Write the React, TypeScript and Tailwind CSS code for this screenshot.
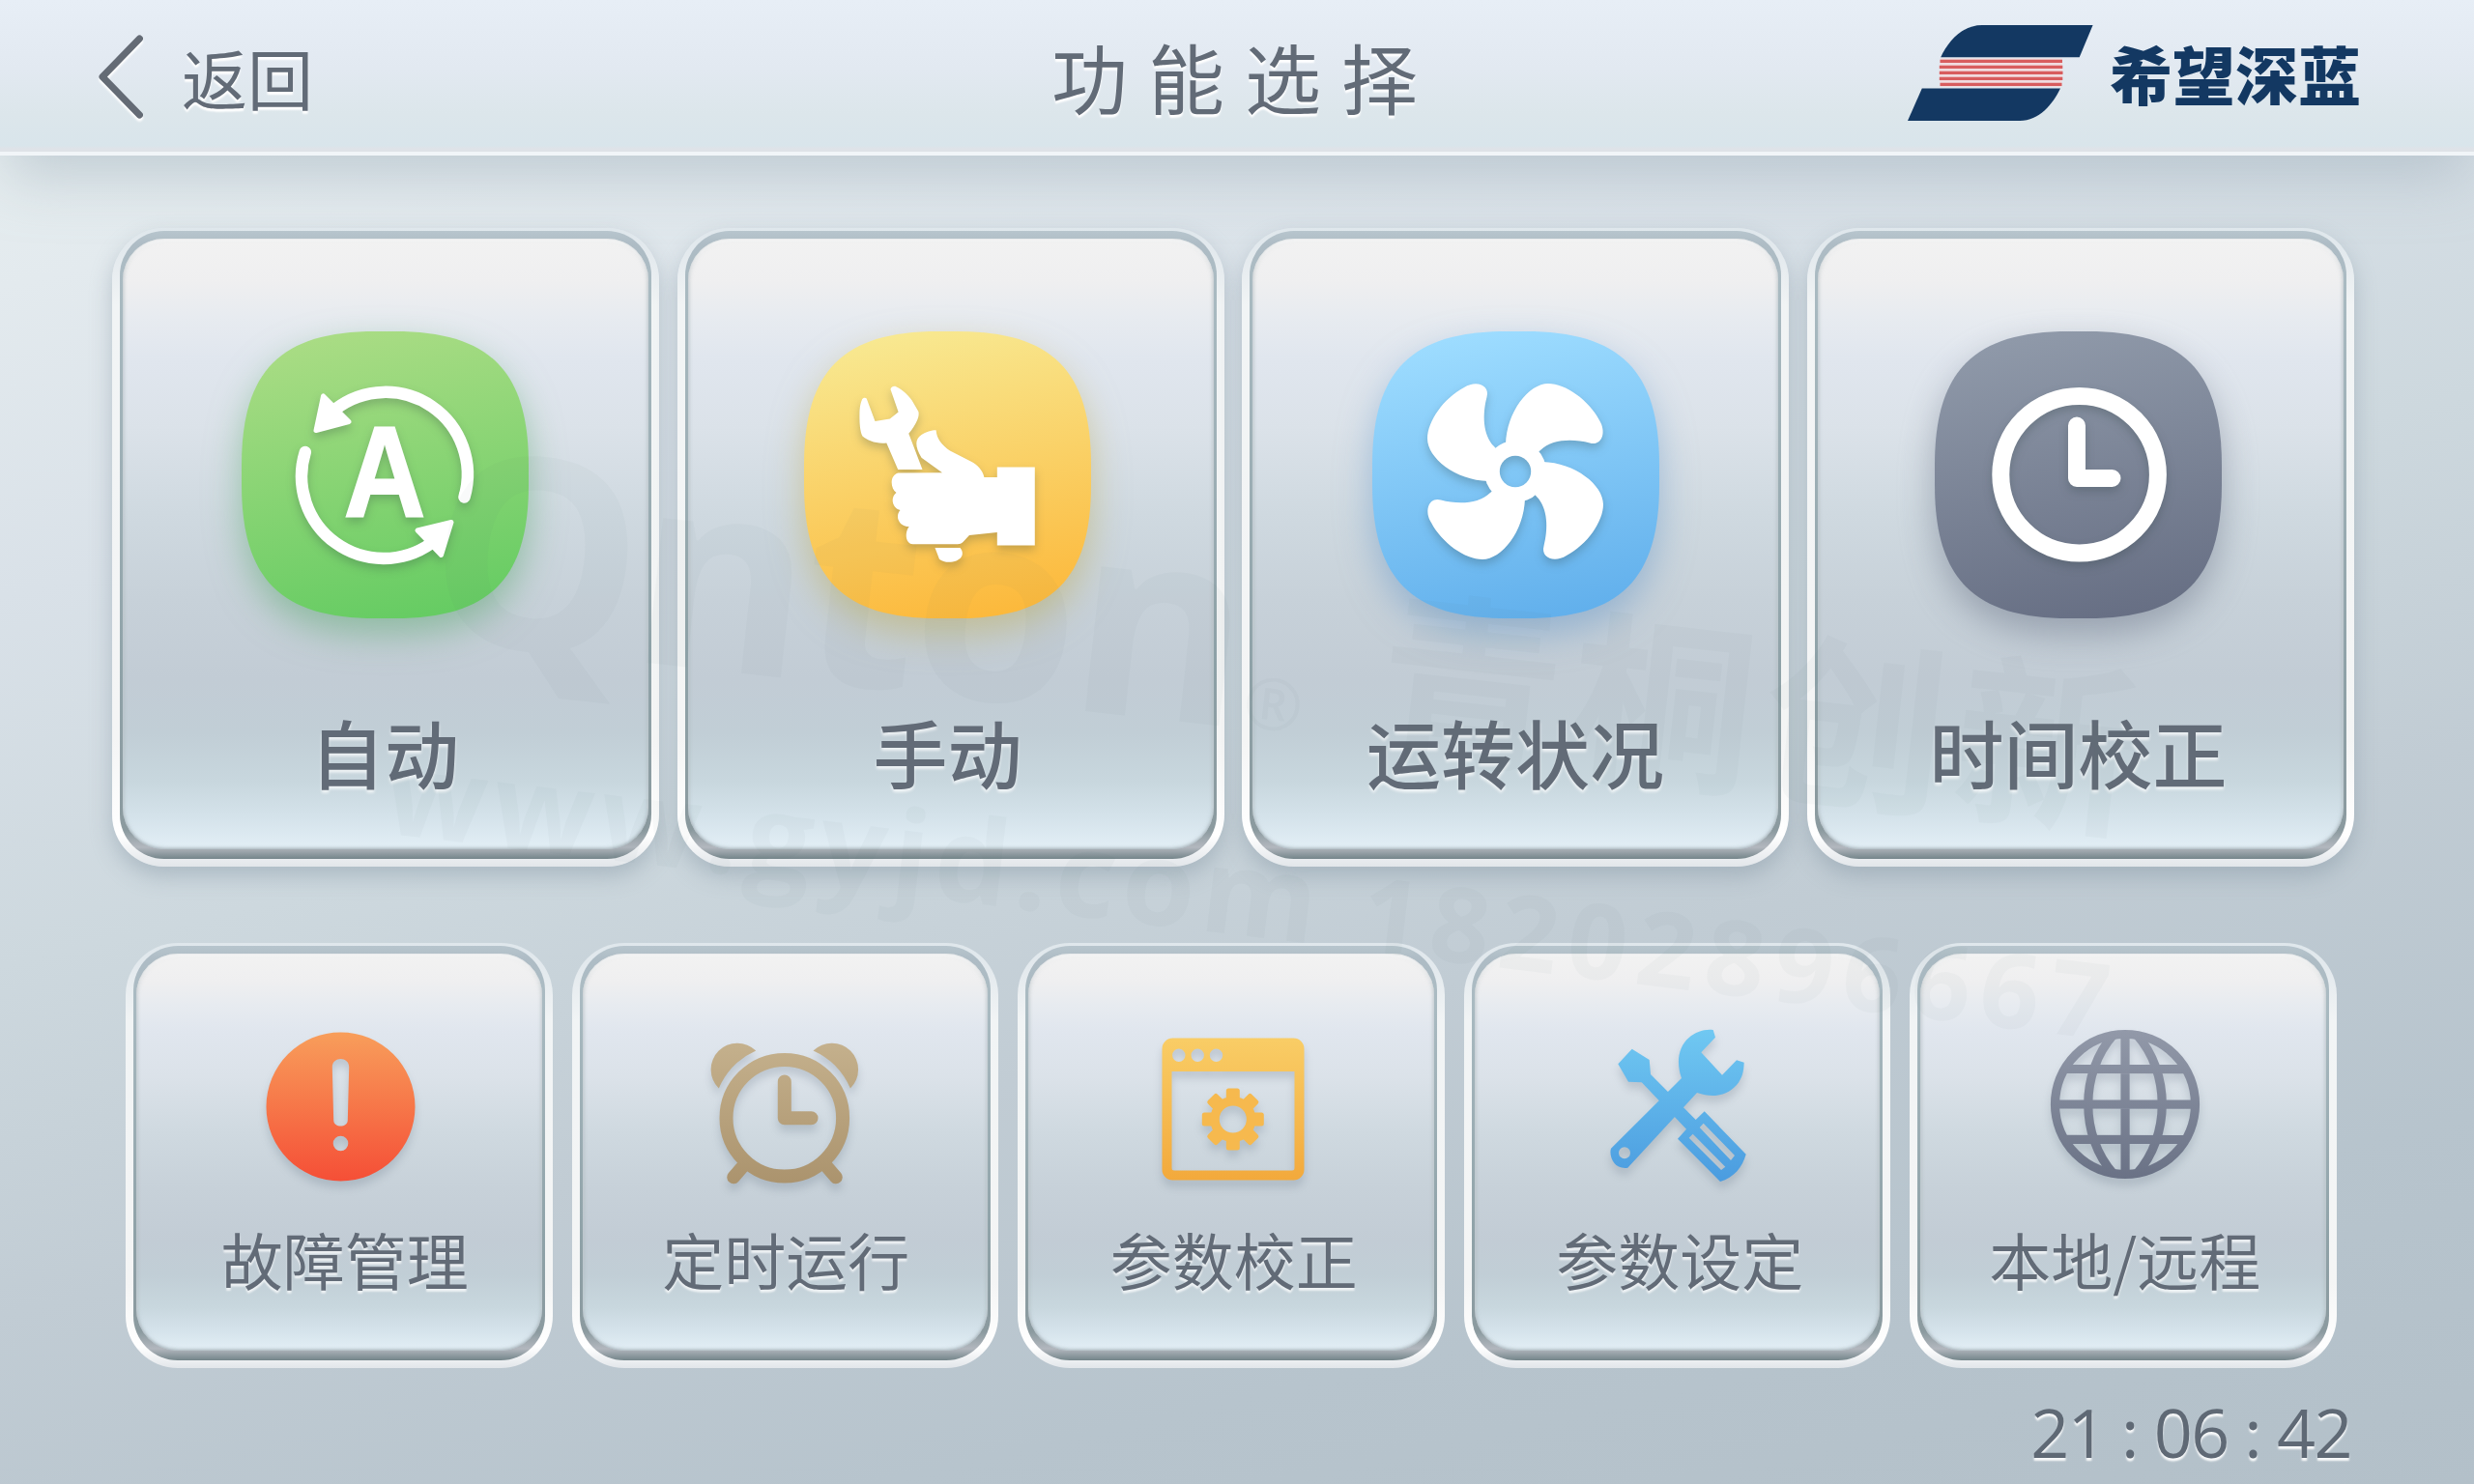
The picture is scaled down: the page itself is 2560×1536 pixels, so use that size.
import React from 'react';
import clsx from 'clsx';

const TILE_PATH =
  'M138.500 0H158.500C256.500 0 297 40.500 297 138.500V158.500C297 256.500 256.500 297 158.500 297H138.500C40.500 297 0 256.500 0 158.500V138.500C0 40.500 40.500 0 138.500 0Z';

type TileProps = {
  id: string;
  from: string;
  to: string;
  className: string;
  children: React.ReactNode;
};

// Rounded gradient tile with a white pictogram on it
function Tile({ id, from, to, className, children }: TileProps) {
  return (
    <svg viewBox="0 0 297 297" className={clsx('w-[297px] h-[297px] overflow-visible', className)}>
      <defs>
        <linearGradient id={id} x1="0.4" y1="0" x2="0.6" y2="1">
          <stop offset="0" stopColor={from} />
          <stop offset="1" stopColor={to} />
        </linearGradient>
      </defs>
      <path d={TILE_PATH} fill={`url(#${id})`} />
      <g className="drop-shadow-[0_5px_5px_rgba(40,60,60,0.25)]">{children}</g>
    </svg>
  );
}

function AutoIcon() {
  return (
    <Tile
      id="tile-auto"
      from="#a9dc84"
      to="#66cc63"
      className="drop-shadow-[0_16px_18px_rgba(85,165,105,0.5)]"
    >
      <g fill="none" stroke="#fff" strokeWidth="12.5" strokeLinecap="round">
        <path d="M97 80.5A85 85 0 0 1 230.5 171.5" />
        <path d="M65.8 125A85 85 0 0 0 196 219.5" />
      </g>
      <g fill="#fff" stroke="#fff" strokeWidth="5" strokeLinejoin="round">
        <path d="M84.5 67L77 102.5L111 93.5Z" />
        <path d="M182 206L217 197.5L206.5 231.5Z" />
      </g>
      <text
        transform="translate(148 192.4) scale(0.88 1)"
        textAnchor="middle"
        fill="#fff"
        stroke="#fff"
        strokeWidth="2"
        className="text-[133px] font-bold font-['Liberation_Sans',sans-serif]"
      >
        A
      </text>
    </Tile>
  );
}

function ManualIcon() {
  return (
    <Tile
      id="tile-manual"
      from="#f8e890"
      to="#fcb93c"
      className="drop-shadow-[0_16px_18px_rgba(190,172,85,0.5)]"
    >
      <g fill="#fff">
        <path d="M57.4 87C57.4 80 58 75 60 70.5C61 68.5 63.5 68 64.7 69.5L73.5 92.9L88.8 90.6L97.6 83.5L89.5 60C89.5 57.5 93 56 95.3 57.2C102 60.5 108 66 111.7 71.4L118.4 83C119 86 118.5 88 117.5 91C115 97 112 101.5 108.3 105.8L122.5 142.9H97.2L85.3 115.5C74 116.5 66 113 60.5 108.5C58 104 57.4 96 57.4 87Z" />
        <path d="M121.5 130.8C118 125 116.3 120 116.3 116C116.3 112 118.5 109 121.5 107C126 104 133 102 136.6 102.2C137 106 138 110 140.5 113.5C143.5 117.5 147 121 151 123.5L173 134.8C179 138 185 143.5 186.4 151H199.8V140.6H238.8V221.4H199.8V208L171 211L164.5 218C163 219.5 161 220.2 159 220.2H112.5C105.5 220 103.5 209 108.7 202C99 202.5 93.5 192 99.5 185C92 183.5 88.5 172.5 95.5 167C89 162 88.5 149 97.5 146.6L143 146.2Z" />
        <path d="M135.5 224H161.5C164 227 164.5 230 163 233C159 240 145 240.5 140 235.7Z" />
      </g>
    </Tile>
  );
}

const BLADE =
  'M-10 -28C-9 -62 14 -91 34 -91C52 -91 76 -74 87 -53C95 -40 89 -26 77 -29.5C60 -34 38 -34 26 -22L0 0Z';

function FanIcon() {
  return (
    <Tile
      id="tile-fan"
      from="#9ddcff"
      to="#62b0ec"
      className="drop-shadow-[0_16px_18px_rgba(100,150,200,0.5)]"
    >
      <mask id="fan-hub" maskUnits="userSpaceOnUse" x="-110" y="-110" width="220" height="220">
        <rect x="-110" y="-110" width="220" height="220" fill="#fff" />
        <circle r="16.2" fill="#000" />
      </mask>
      <g transform="translate(148 145)">
        <g fill="#fff" mask="url(#fan-hub)">
          {[0, 90, 180, 270].map((deg) => (
            <path key={deg} d={BLADE} transform={`rotate(${deg})`} />
          ))}
          <circle r="32" />
        </g>
      </g>
    </Tile>
  );
}

function ClockIcon() {
  return (
    <Tile
      id="tile-clock"
      from="#8f99a9"
      to="#676f84"
      className="drop-shadow-[0_16px_18px_rgba(95,105,125,0.45)]"
    >
      <g fill="none" stroke="#fff" strokeWidth="18" strokeLinecap="round" strokeLinejoin="round">
        <circle cx="149.6" cy="148.2" r="81.3" />
        <path d="M147 97.5V152H183.5" />
      </g>
    </Tile>
  );
}

type GlyphProps = {
  id: string;
  from: string;
  to: string;
  children: React.ReactNode;
};

// Flat icon canvas used by the small cards; children refer to the gradient by id
function Glyph({ id, from, to, children }: GlyphProps) {
  return (
    <svg
      viewBox="0 0 160 160"
      className="w-[160px] h-[160px] overflow-visible drop-shadow-[0_7px_4px_rgba(90,110,125,0.24)]"
    >
      <defs>
        <linearGradient id={id} gradientUnits="userSpaceOnUse" x1="80" y1="0" x2="80" y2="160">
          <stop offset="0" stopColor={from} />
          <stop offset="1" stopColor={to} />
        </linearGradient>
      </defs>
      {children}
    </svg>
  );
}

function FaultIcon() {
  return (
    <Glyph id="g-fault" from="#f8a05c" to="#f54e36">
      <path
        fill="url(#g-fault)"
        fillRule="evenodd"
        d="M81.5 4.5A77 77 0 1 1 81.5 158.5A77 77 0 1 1 81.5 4.5ZM72.8 40.5L74.2 95.5C74.4 103.5 88.6 103.5 88.8 95.5L90.2 40.5C90.2 29 72.8 29 72.8 40.5ZM81.5 111.7A7.8 7.8 0 1 0 81.5 127.3A7.8 7.8 0 1 0 81.5 111.7Z"
      />
    </Glyph>
  );
}

function AlarmIcon() {
  return (
    <Glyph id="g-alarm" from="#c4b08c" to="#a8906a">
      <g transform="translate(6.5 17.5)">
        <g fill="url(#g-alarm)">
          <path d="M43.7 6A26.7 26.7 0 0 0 5.3 45A76 76 0 0 1 43.7 6Z" />
          <path d="M103 6A26.7 26.7 0 0 1 141.4 45A76 76 0 0 0 103 6Z" />
        </g>
        <g fill="none" stroke="url(#g-alarm)" strokeLinecap="round" strokeLinejoin="round">
          <circle cx="73.3" cy="75.7" r="60.3" strokeWidth="14" />
          <path d="M73.3 38V75.7H101" strokeWidth="14" />
          <path d="M30 126L20.5 137M117 126L126.5 137" strokeWidth="13.5" />
        </g>
      </g>
    </Glyph>
  );
}

function WindowIcon() {
  return (
    <Glyph id="g-window" from="#f9cd66" to="#f2a638">
      <g transform="translate(8.5 10.5)" fill="url(#g-window)">
        <path
          fillRule="evenodd"
          d="M11 0H136A11 11 0 0 1 147 11V136A11 11 0 0 1 136 147H11A11 11 0 0 1 0 136V11A11 11 0 0 1 11 0ZM10 34.5V134.5Q10 137 12.5 137H134.5Q137 137 137 134.5V34.5ZM17.3 11A6.7 6.7 0 1 0 17.3 24.4A6.7 6.7 0 1 0 17.3 11ZM36.7 11A6.7 6.7 0 1 0 36.7 24.4A6.7 6.7 0 1 0 36.7 11ZM56 11A6.7 6.7 0 1 0 56 24.4A6.7 6.7 0 1 0 56 11Z"
        />
        {/* Gear */}
        <g transform="translate(73.3 84)" fill="#f6b94e">
          {[0, 45, 90, 135, 180, 225, 270, 315].map((deg) => (
            <rect
              key={deg}
              x="-7"
              y="-32"
              width="14"
              height="14"
              rx="2.5"
              transform={`rotate(${deg})`}
            />
          ))}
          <circle r="18.8" fill="none" stroke="#f6b94e" strokeWidth="9.5" />
        </g>
      </g>
    </Glyph>
  );
}

function ToolsIcon() {
  return (
    <Glyph id="g-tools" from="#70c8f2" to="#4a9bdf">
      <g transform="translate(11 2)" fill="url(#g-tools)" fillRule="evenodd">
        <path d="M22.7 19.7L40.7 31L42 46L88.7 93L97.7 84.3L140.7 128.7C137 142 128 153 114 157L70 112.7L79 102.7L32.7 54.3L19 53.7L8.3 35.3ZM96.7 96.7L92.7 101L125 135L129 130ZM85.7 107.7L81.7 111.7L115 145L119.3 141.7Z" />
        <path d="M106.7 0L109 7.7L94.3 23.3L116 46.7L131 31.3L138.7 33.7C138.5 42 137 50 131 57C121 68.5 106 70.5 90 65L18.3 142.7C12 143.5 7 141.5 4.5 138C1 134 -0.5 127 1 122.7L74 50C68 33 71 17 81.7 8C89 2 97 -1 106.7 0ZM15 121.3A6 6 0 1 0 15 133.3A6 6 0 1 0 15 121.3Z" />
      </g>
    </Glyph>
  );
}

function GlobeIcon() {
  return (
    <Glyph id="g-globe" from="#9299a9" to="#687084">
      <g transform="translate(5 2)" fill="none" stroke="url(#g-globe)" strokeWidth="9.2">
        <circle cx="77" cy="77" r="72.5" />
        <path d="M77 4L77.1 150M5 77L149 77.1M16 40.5L138 40.6M16 113.4L138 113.5" />
        <path d="M65 5C30 44 30 110 65 149M89 5C124 44 124 110 89 149" />
      </g>
    </Glyph>
  );
}

function BrandMark() {
  return (
    <svg viewBox="1974 25 192 101" className="w-[192px] h-[101px]">
      <g fill="#133862">
        <path d="M2008.2 59.2C2016 43 2030 26 2051 26H2165.6L2151.7 59.2Z" />
        <path d="M1988.8 91.5H2132C2124 108 2110 125 2090 125H1974Z" />
      </g>
      <path d="M2008 60.5H2133.5Q2135 75 2133 90H2008Q2006 75 2008 60.5Z" fill="#f1dcdf" />
      <path
        d="M2007.5 63.3H2134M2006.8 69.3H2134.3M2006.8 75.3H2134.5M2006.8 81.3H2134.3M2007.5 87.3H2133.5"
        stroke="#d85d5e"
        strokeWidth="3.3"
      />
    </svg>
  );
}

type CardItem = {
  label: string;
  icon: () => React.JSX.Element;
  nudge?: string;
};

const mainCards: CardItem[] = [
  { label: '自动', icon: AutoIcon, nudge: 'pr-0.5' },
  { label: '手动', icon: ManualIcon, nudge: 'pr-1.5' },
  { label: '运转状况', icon: FanIcon },
  { label: '时间校正', icon: ClockIcon, nudge: 'pr-1' },
];

const subCards: CardItem[] = [
  { label: '故障管理', icon: FaultIcon, nudge: 'pl-3' },
  { label: '定时运行', icon: AlarmIcon, nudge: 'pl-0.5' },
  { label: '参数校正', icon: WindowIcon, nudge: 'pl-1.5' },
  { label: '参数设定', icon: ToolsIcon, nudge: 'pl-1.5' },
  { label: '本地/远程', icon: GlobeIcon, nudge: 'pl-1' },
];

type BevelProps = {
  className?: string;
  faceClassName?: string;
  children: React.ReactNode;
};

// White rim, dark groove, then the glossy face
function Bevel({ className, faceClassName, children }: BevelProps) {
  return (
    <button
      className={clsx(
        'block rounded-[54px] px-[8px] pt-[3px] pb-[8px]',
        'bg-[linear-gradient(180deg,#dfe7ec_0,#e4eaee_30px,#f1f4f5_80px,#f4f5f5_80%,#ffffff_95%,#e2e6ea_100%)]',
        className
      )}
    >
      <div className="h-full rounded-[46px] px-[3px] pt-[8px] pb-[10px] bg-[linear-gradient(180deg,#b7c5cd_0,#aebcc5_14px,#a9bac1_60px,#8fa2a8_70%,#8b9a9f_calc(100%_-_30px),#b2b7be_calc(100%_-_12px),#74858a_100%)]">
        <div
          className={clsx(
            'h-full rounded-[43px] flex flex-col items-center',
            'bg-[linear-gradient(180deg,#f2f2f2_0%,#efeff0_7%,#e7ebf0_13%,#e0e6ee_20%,#dbe2e9_31%,#cfd9e0_45%,#c7d1d9_59%,#c2ccd5_72%,#c1ced6_81%,#c8d7de_89%,#d5e3eb_95%,#e3eff6_100%)]',
            'shadow-[inset_0_-1px_3px_rgba(150,160,166,0.6),inset_0_3px_3px_rgba(255,255,255,0.7),inset_0_0_5px_rgba(150,165,172,0.6)]',
            faceClassName
          )}
        >
          {children}
        </div>
      </div>
    </button>
  );
}

function Watermark() {
  return (
    <svg
      viewBox="0 0 2560 1536"
      aria-hidden="true"
      className="absolute inset-0 w-full h-full pointer-events-none fill-[#4a6468]/[0.035]"
    >
      <g className="font-['Open_Sans','Noto_Sans_CJK_SC',sans-serif] font-bold">
        <text transform="translate(435 660) rotate(6.3)" textLength="852" className="text-[276px]">
          Qnton
        </text>
        <text transform="translate(1284 752) rotate(6.3)" className="text-[74px] font-normal">
          ®
        </text>
        <text transform="translate(1420 768) rotate(6.3)" textLength="790" className="text-[190px]">
          青桐创新
        </text>
        <text transform="translate(395 862) rotate(6.8)" textLength="970" className="text-[122px]">
          www.gyjd.com
        </text>
        <text transform="translate(1405 984) rotate(6.8)" textLength="778" className="text-[108px]">
          18202896667
        </text>
      </g>
    </svg>
  );
}

export default function App() {
  return (
    <div className="relative w-[2560px] h-[1536px] overflow-hidden flex flex-col font-['Noto_Sans_CJK_SC',sans-serif] text-[#626b77] bg-[linear-gradient(167deg,#e9f1f1_0%,#e3eaee_14%,#d9e1e8_29%,#cdd8de_47%,#c1ccd4_64%,#b7c4cd_82%,#b3c0c9_100%)]">
      <header className="h-[161px] shrink-0 grid grid-cols-3 items-center pl-[101px] pr-[117px] border-b-[4px] border-[#f1f5f8] bg-[linear-gradient(180deg,#e7eef6_0%,#e2e9f1_45%,#dce6eb_75%,#d9e5eb_96%,#dfe3e8_98%)] shadow-[0_28px_60px_-8px_rgba(155,171,184,0.5)]">
        <button className="flex items-center gap-[39px] pt-[3px] text-[68px] leading-none [text-shadow:0_3px_2px_#ffffff]">
          <svg
            viewBox="0 0 48 90"
            className="w-[48px] h-[90px] drop-shadow-[0_3px_1px_#ffffff]"
            fill="none"
            stroke="#646b75"
            strokeWidth="7"
            strokeLinecap="round"
            strokeLinejoin="round"
          >
            <path d="M43.4 5L5 44.5L43.4 84" />
          </svg>
          <span>返回</span>
        </button>
        <h1 className="text-center text-[79px] leading-none tracking-[21px] pl-[32px] pb-[1px] [text-shadow:0_3px_2px_#ffffff]">
          功能选择
        </h1>
        <div className="flex items-center justify-end gap-[17px] pb-[6px]">
          <BrandMark />
          <span className="text-[65px] leading-none font-black text-[#133862]">希望深蓝</span>
        </div>
      </header>

      <main className="flex-1 flex flex-col">
        <div className="flex gap-[18.5px] mt-[75px] ml-[116px]">
          {mainCards.map(({ label, icon: Icon, nudge }) => (
            <Bevel
              key={label}
              className="w-[566px] h-[661px] shadow-[0_10px_22px_rgba(130,148,162,0.45)]"
              faceClassName={clsx('pt-[96px]', nudge)}
            >
              <Icon />
              <span className="mt-[99px] text-[77px] leading-none font-medium [text-shadow:0_3px_3px_rgba(255,255,255,0.7)]">
                {label}
              </span>
            </Bevel>
          ))}
        </div>

        <div className="flex gap-[20px] mt-[79px] ml-[130px]">
          {subCards.map(({ label, icon: Icon, nudge }) => (
            <Bevel key={label} className="w-[441.5px] h-[440px]" faceClassName="pt-[77px]">
              <Icon />
              <span
                className={clsx(
                  'mt-[46px] text-[64px] leading-none [text-shadow:0_3px_2px_rgba(255,255,255,0.7)]',
                  nudge
                )}
              >
                {label}
              </span>
            </Bevel>
          ))}
        </div>

        <time className="self-end mt-[31px] mr-[127px] text-[70px] leading-none tracking-[-1.5px] font-['Open_Sans',sans-serif] text-[#5f6975] [text-shadow:0_3px_2px_rgba(255,255,255,0.9)]">
          21 : 06 : 42
        </time>
      </main>

      <Watermark />
    </div>
  );
}
